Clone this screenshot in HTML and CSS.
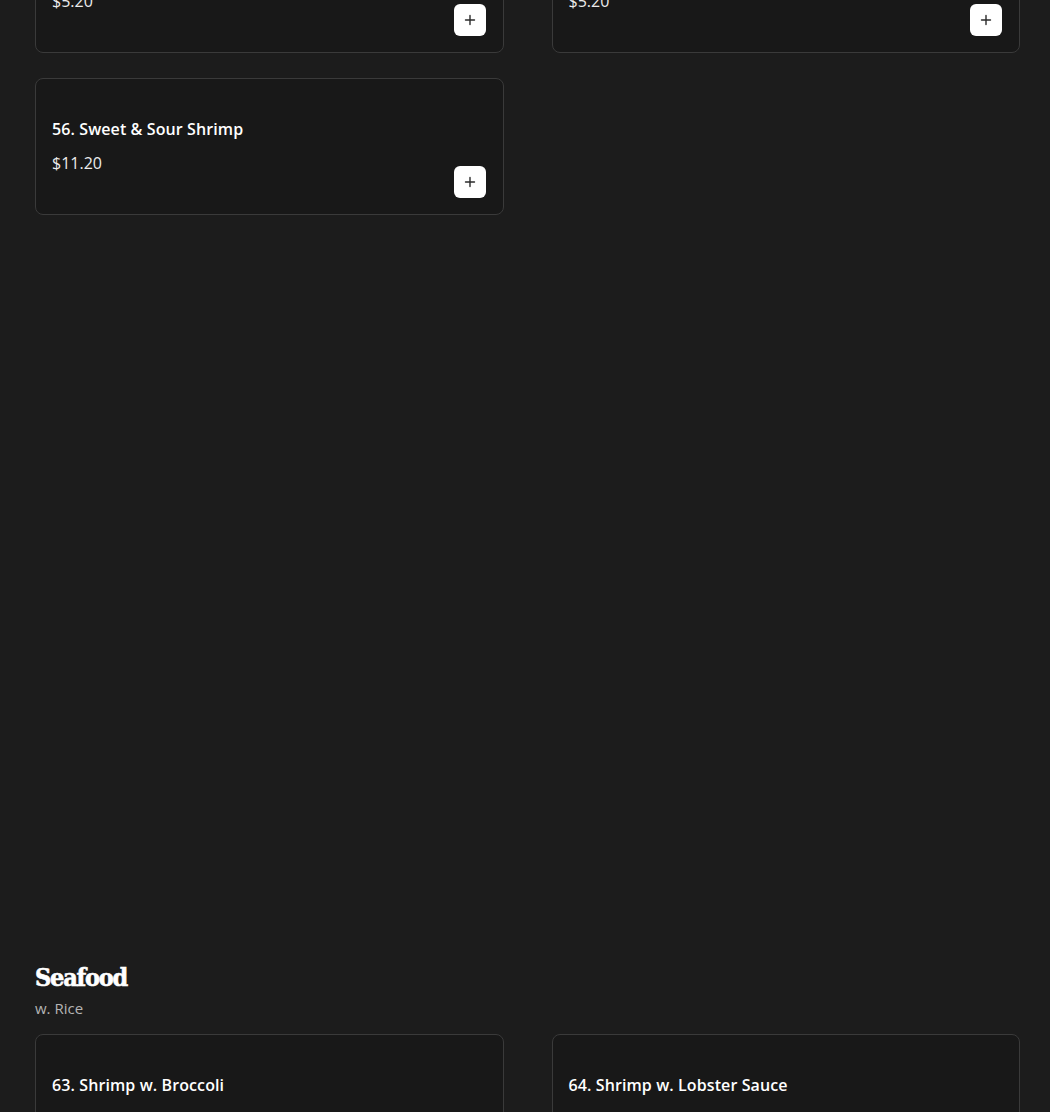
FILE: index.html
```html
<!DOCTYPE html>
<html lang="en">
<head>
  <meta charset="UTF-8" />
  <meta name="viewport" content="width=device-width, initial-scale=1.0" />
  <title>Menu</title>
  <link rel="stylesheet" href="styles.css">
</head>
<body>

  <!-- previous category (scrolled past) -->
  <section class="category category-prev">
    <div class="item-grid">
      <div class="item-card">
        <div class="item-info">
          <h3 class="item-name">54. Shrimp Egg Foo Young</h3>
          <div class="item-price">$5.20</div>
        </div>
        <button class="add-btn" aria-label="Add">
          <svg viewBox="0 0 12 12" width="12" height="12"><path d="M6 1.5v9M1.5 6h9" stroke="#2b2b2b" stroke-width="1.4" stroke-linecap="round"/></svg>
        </button>
      </div>
      <div class="item-card">
        <div class="item-info">
          <h3 class="item-name">55. Shrimp Fried Rice</h3>
          <div class="item-price">$5.20</div>
        </div>
        <button class="add-btn" aria-label="Add">
          <svg viewBox="0 0 12 12" width="12" height="12"><path d="M6 1.5v9M1.5 6h9" stroke="#2b2b2b" stroke-width="1.4" stroke-linecap="round"/></svg>
        </button>
      </div>
      <div class="item-card">
        <div class="item-info">
          <h3 class="item-name">56. Sweet &amp; Sour Shrimp</h3>
          <div class="item-price">$11.20</div>
        </div>
        <button class="add-btn" aria-label="Add">
          <svg viewBox="0 0 12 12" width="12" height="12"><path d="M6 1.5v9M1.5 6h9" stroke="#2b2b2b" stroke-width="1.4" stroke-linecap="round"/></svg>
        </button>
      </div>
    </div>
  </section>

  <!-- Seafood -->
  <section class="category">
    <div class="category-head">
      <h2 class="category-title">Seafood</h2>
      <div class="category-note">w. Rice</div>
    </div>
    <div class="item-grid">
      <div class="item-card">
        <div class="item-info">
          <h3 class="item-name">63. Shrimp w. Broccoli</h3>
          <div class="item-price">$12.50</div>
        </div>
        <button class="add-btn" aria-label="Add">
          <svg viewBox="0 0 12 12" width="12" height="12"><path d="M6 1.5v9M1.5 6h9" stroke="#2b2b2b" stroke-width="1.4" stroke-linecap="round"/></svg>
        </button>
      </div>
      <div class="item-card">
        <div class="item-info">
          <h3 class="item-name">64. Shrimp w. Lobster Sauce</h3>
          <div class="item-price">$12.50</div>
        </div>
        <button class="add-btn" aria-label="Add">
          <svg viewBox="0 0 12 12" width="12" height="12"><path d="M6 1.5v9M1.5 6h9" stroke="#2b2b2b" stroke-width="1.4" stroke-linecap="round"/></svg>
        </button>
      </div>
    </div>
  </section>

</body>
</html>
```

FILE: styles.css
```css
:root {
  --bg-color: #1c1c1c;
  --card-bg: #181818;
  --border: #3a3a3a;
  --text-color: #ffffff;
  --muted: #b4b4b4;
}

body {
  margin: 0;
  padding: 0 30px 0 35px;
  background: var(--bg-color);
  color: var(--text-color);
  font-family: 'Open Sans', 'Liberation Sans', sans-serif;
  overflow: hidden;
}

.category-prev {
  margin-top: -84px;
  min-height: 1044px;
}

.category-head {
  padding-top: 2px;
  margin-bottom: 16px;
}

.category-title {
  margin: 0;
  font-family: 'DejaVu Serif Condensed', 'DejaVu Serif', serif;
  font-size: 25px;
  font-weight: 700;
  line-height: 32px;
  letter-spacing: -1.2px;
  -webkit-text-stroke: 0.6px #fff;
}

.category-note {
  font-size: 15px;
  line-height: 20px;
  color: var(--muted);
  margin-top: 4px;
}

.item-grid {
  display: grid;
  grid-template-columns: 1fr 1fr;
  column-gap: 48px;
  row-gap: 25px;
}

.item-card {
  box-sizing: border-box;
  min-height: 137px;
  padding: 16px 17px 16px 16px;
  background: var(--card-bg);
  border: 1px solid var(--border);
  border-radius: 8px;
  display: flex;
  justify-content: space-between;
}

.item-info {
  padding-top: 22px;
}

.item-name {
  margin: 0;
  font-size: 16px;
  font-weight: 600;
  line-height: 24px;
  letter-spacing: 0.1px;
}

.item-price {
  margin-top: 10px;
  font-size: 16px;
  line-height: 24px;
  color: #ececec;
}

.add-btn {
  align-self: flex-end;
  flex-shrink: 0;
  width: 32px;
  height: 32px;
  padding: 0;
  border: none;
  border-radius: 6px;
  background: #fff;
  display: flex;
  align-items: center;
  justify-content: center;
  cursor: pointer;
}
```
